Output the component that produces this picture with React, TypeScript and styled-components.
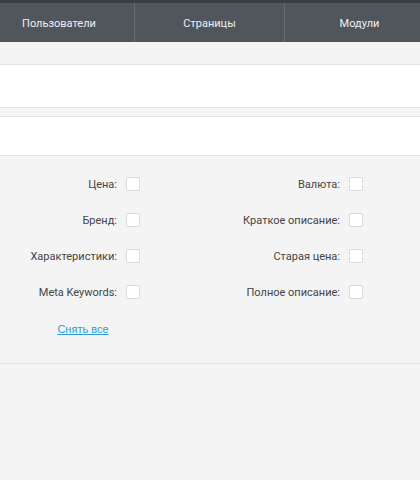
import React from "react";
import styled, { createGlobalStyle } from "styled-components";

const Global = createGlobalStyle`
  html, body { margin: 0; padding: 0; background: #f4f4f4; }
  body { font-family: Roboto, "Liberation Sans", Arial, sans-serif; overflow: hidden; }
  * { box-sizing: border-box; }
`;

const Page = styled.div`
  width: 420px;
  height: 480px;
  background: #f4f4f4;
  overflow: hidden;
`;

const TopStrip = styled.div`
  height: 3px;
  background: #3a3f44;
`;

const Nav = styled.nav`
  height: 39px;
  background: #50565c;
  display: flex;
  margin-left: -16px;
`;

const NavItem = styled.div<{ $divider?: boolean }>`
  flex: 0 0 150px;
  display: flex;
  align-items: center;
  justify-content: center;
  color: #eef0f2;
  font-size: 11px;
  padding-top: 2px;
  border-left: ${(p) => (p.$divider ? "1px solid #676d73" : "none")};
`;

const Band = styled.div<{ $h: number }>`
  height: ${(p) => p.$h}px;
  background: #f4f4f4;
`;

const WhitePanel = styled.div<{ $h: number }>`
  height: ${(p) => p.$h}px;
  background: #ffffff;
  border-top: 1px solid #e2e2e2;
  border-bottom: 1px solid #e2e2e2;
`;

const Section = styled.section`
  padding: 21px 0 0;
  height: 208px;
  border-bottom: 1px solid #e2e2e2;
  background: #f4f4f4;
`;

const Grid = styled.div`
  display: grid;
  grid-template-columns: 223px 1fr;
  row-gap: 22px;
`;

const Field = styled.label`
  display: flex;
  align-items: center;
  height: 14px;
`;

const LabelText = styled.span`
  width: 117px;
  text-align: right;
  font-size: 11px;
  color: #444;
  margin-right: 9px;
  white-space: nowrap;
`;

const Box = styled.span`
  width: 14px;
  height: 14px;
  background: #fff;
  border: 1px solid #dcdcdc;
  border-radius: 1px;
`;

const LinkRow = styled.div`
  width: 166px;
  margin-top: 23px;
  height: 14px;
  display: flex;
  justify-content: center;
  align-items: center;
`;

const Link = styled.a`
  font-family: "Liberation Sans", Arial, sans-serif;
  font-size: 11px;
  color: #2b9bd3;
  text-decoration: underline;
  cursor: pointer;
`;

const left = ["Цена:", "Бренд:", "Характеристики:", "Meta Keywords:"];
const right = ["Валюта:", "Краткое описание:", "Старая цена:", "Полное описание:"];

export default function App() {
  const cells: string[] = [];
  left.forEach((l, i) => {
    cells.push(l, right[i]);
  });
  return (
    <Page>
      <Global />
      <TopStrip />
      <Nav>
        <NavItem>Пользователи</NavItem>
        <NavItem $divider>Страницы</NavItem>
        <NavItem $divider>Модули</NavItem>
      </Nav>
      <Band $h={22} />
      <WhitePanel $h={44} />
      <Band $h={8} />
      <WhitePanel $h={40} />
      <Section>
        <Grid>
          {cells.map((c) => (
            <Field key={c}>
              <LabelText>{c}</LabelText>
              <Box />
            </Field>
          ))}
        </Grid>
        <LinkRow>
          <Link>Снять все</Link>
        </LinkRow>
      </Section>
    </Page>
  );
}
